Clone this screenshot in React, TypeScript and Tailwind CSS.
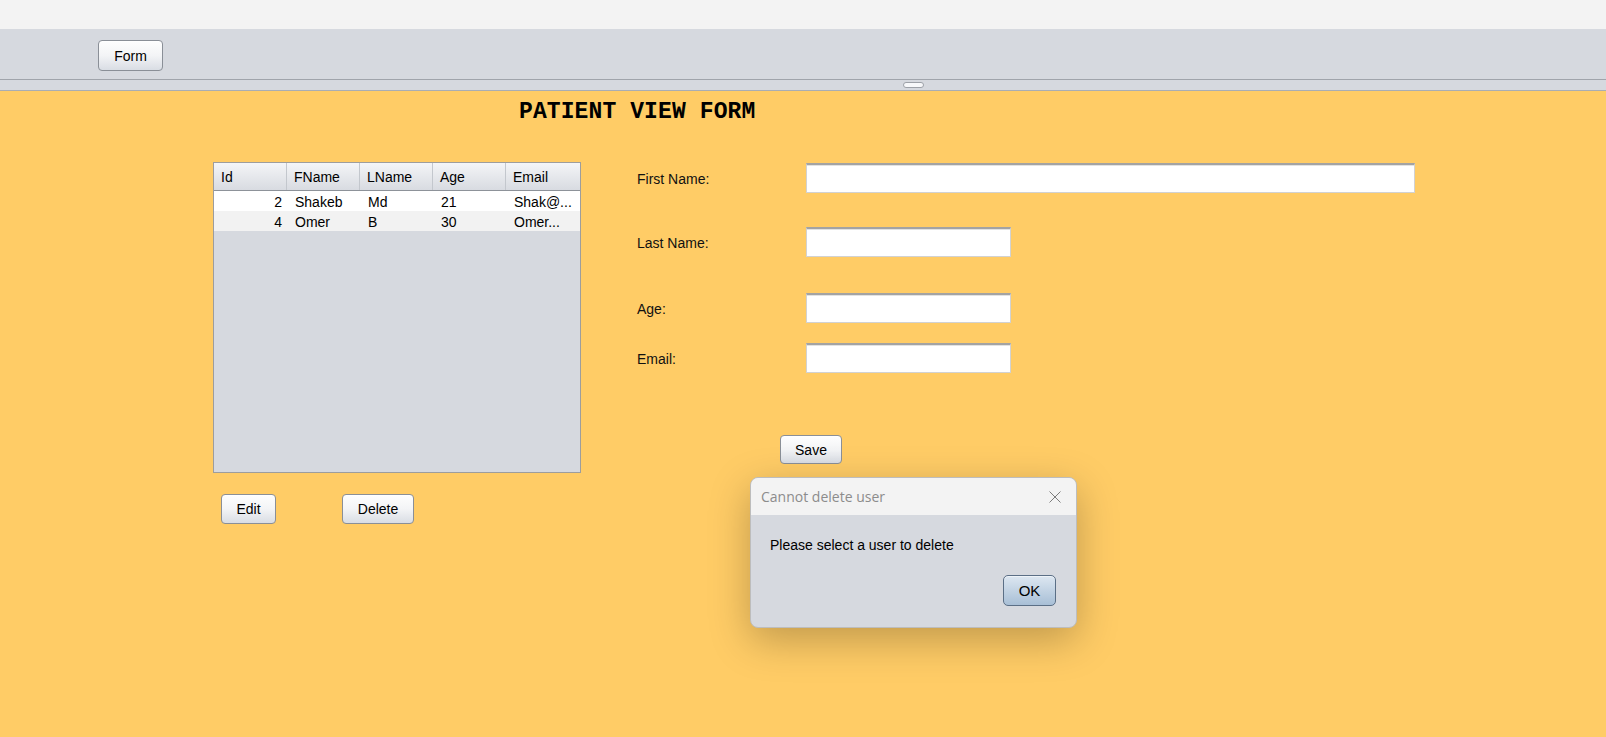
import React from "react";

const rows = [
  { id: 2, fname: "Shakeb", lname: "Md", age: 21, email: "Shak@..." },
  { id: 4, fname: "Omer", lname: "B", age: 30, email: "Omer..." },
];

const cols = ["Id", "FName", "LName", "Age", "Email"];

function SwingButton({ label, className }: { label: string; className: string }) {
  return (
    <button
      className={`flex items-center justify-center rounded-[4px] border border-[#8a8f97] bg-gradient-to-b from-[#fefefe] via-[#f3f4f6] to-[#d9dde4] pt-[1px] text-[14px] text-black shadow-[inset_0_1px_0_#ffffff] ${className}`}
    >
      {label}
    </button>
  );
}

function Field({ label, wide, className }: { label: string; wide?: boolean; className: string }) {
  return (
    <div className={`flex items-center ${className}`}>
      <span className="w-[169px] pt-[3px] text-[14px] text-[#111]">{label}</span>
      <div
        className={`h-[30px] border border-t-2 border-[#d2d2d2] border-t-[#a3a3a3] bg-white shadow-[inset_0_1px_0_#e2e2e2] ${wide ? "w-[609px]" : "w-[205px]"}`}
      />
    </div>
  );
}

export default function App() {
  return (
    <div className="relative flex h-[737px] w-[1606px] flex-col overflow-hidden font-['Liberation_Sans',Arial,sans-serif]">
      {/* window top */}
      <div className="h-[29px] bg-[#f3f3f3]" />

      {/* toolbar */}
      <div className="h-[51px] border-b border-[#a0a4ab] bg-[#d6d9df] pl-[98px] pt-[11px]">
        <SwingButton label="Form" className="h-[31px] w-[65px]" />
      </div>

      {/* split divider */}
      <div className="flex h-[11px] justify-start border-b border-[#a9adb4] bg-[#d6d9df] pl-[903px] pt-[2px]">
        <div className="h-[6px] w-[21px] rounded-[3px] border border-[#9da1a8] bg-[#f7f8fa]" />
      </div>

      {/* main panel */}
      <div className="flex-1 bg-[#ffcc66]">
        <div className="pl-[519px] pt-[10px] font-['Liberation_Mono','Courier_New',monospace] text-[23px] font-bold leading-[23px] tracking-[0.1px] text-black">
          PATIENT VIEW FORM
        </div>

        <div className="mt-[38px] flex items-start pl-[213px]">
          {/* table column */}
          <div className="flex flex-col">
            <div className="flex h-[311px] w-[368px] flex-col border border-[#9d9d9d] bg-[#d6d9df]">
              <div className="flex h-[28px] border-b border-[#8d9299] bg-gradient-to-b from-[#f4f5f7] to-[#d8dbe1]">
                {cols.map((c, i) => (
                  <div
                    key={c}
                    className={`flex h-full items-center pl-[7px] pt-[1px] text-[14px] text-black ${i < 4 ? "w-[73px] border-r border-[#c3c7cd]" : "flex-1"}`}
                  >
                    {c}
                  </div>
                ))}
              </div>
              {rows.map((r, idx) => (
                <div
                  key={r.id}
                  className={`flex h-[20px] items-center pt-[2px] text-[14px] text-black ${idx === 0 ? "bg-white" : "bg-[#f2f2f2]"}`}
                >
                  <div className="w-[73px] pr-[5px] text-right">{r.id}</div>
                  <div className="w-[73px] pl-[8px]">{r.fname}</div>
                  <div className="w-[73px] pl-[8px]">{r.lname}</div>
                  <div className="w-[73px] pl-[8px]">{r.age}</div>
                  <div className="flex-1 pl-[8px]">{r.email}</div>
                </div>
              ))}
            </div>
            <div className="mt-[21px] flex pl-[8px]">
              <SwingButton label="Edit" className="h-[30px] w-[55px]" />
              <SwingButton label="Delete" className="ml-[66px] h-[30px] w-[72px]" />
            </div>
          </div>

          {/* form column */}
          <div className="ml-[56px] flex flex-col">
            <Field label="First Name:" wide className="mt-[1px]" />
            <Field label="Last Name:" className="mt-[34px]" />
            <Field label="Age:" className="mt-[36px]" />
            <Field label="Email:" className="mt-[20px]" />
            <SwingButton label="Save" className="ml-[143px] mt-[62px] h-[29px] w-[62px]" />
          </div>
        </div>
      </div>

      {/* message dialog */}
      <div className="absolute left-[750px] top-[477px] w-[327px] overflow-hidden rounded-[8px] border border-[#bdbdbd] bg-[#d6d9df] shadow-[0_12px_40px_rgba(0,0,0,0.25)]">
        <div className="flex h-[37px] items-center justify-between bg-[#f3f3f3] pl-[10px] pr-[14px]">
          <span className="font-['Open_Sans','Noto_Sans',sans-serif] text-[14px] text-[#8c8c8c]">
            Cannot delete user
          </span>
          <svg width="12" height="12" viewBox="0 0 12 12" className="mr-[1px]">
            <path d="M0.5 0.5 L11.5 11.5 M11.5 0.5 L0.5 11.5" stroke="#7c7c7c" strokeWidth="1" />
          </svg>
        </div>
        <div className="flex flex-col px-[19px] pb-[21px] pt-[22px]">
          <div className="h-[16px] text-[14px] leading-[16px] text-black">Please select a user to delete</div>
          <div className="mt-[22px] flex justify-end pr-[1px]">
            <button className="flex h-[31px] w-[53px] items-center justify-center rounded-[5px] border border-[#5b6f86] bg-gradient-to-b from-[#dde7f1] to-[#a8bfd6] pt-[1px] text-[15px] text-black shadow-[inset_0_1px_0_#eef3f8]">
              OK
            </button>
          </div>
        </div>
      </div>
    </div>
  );
}
